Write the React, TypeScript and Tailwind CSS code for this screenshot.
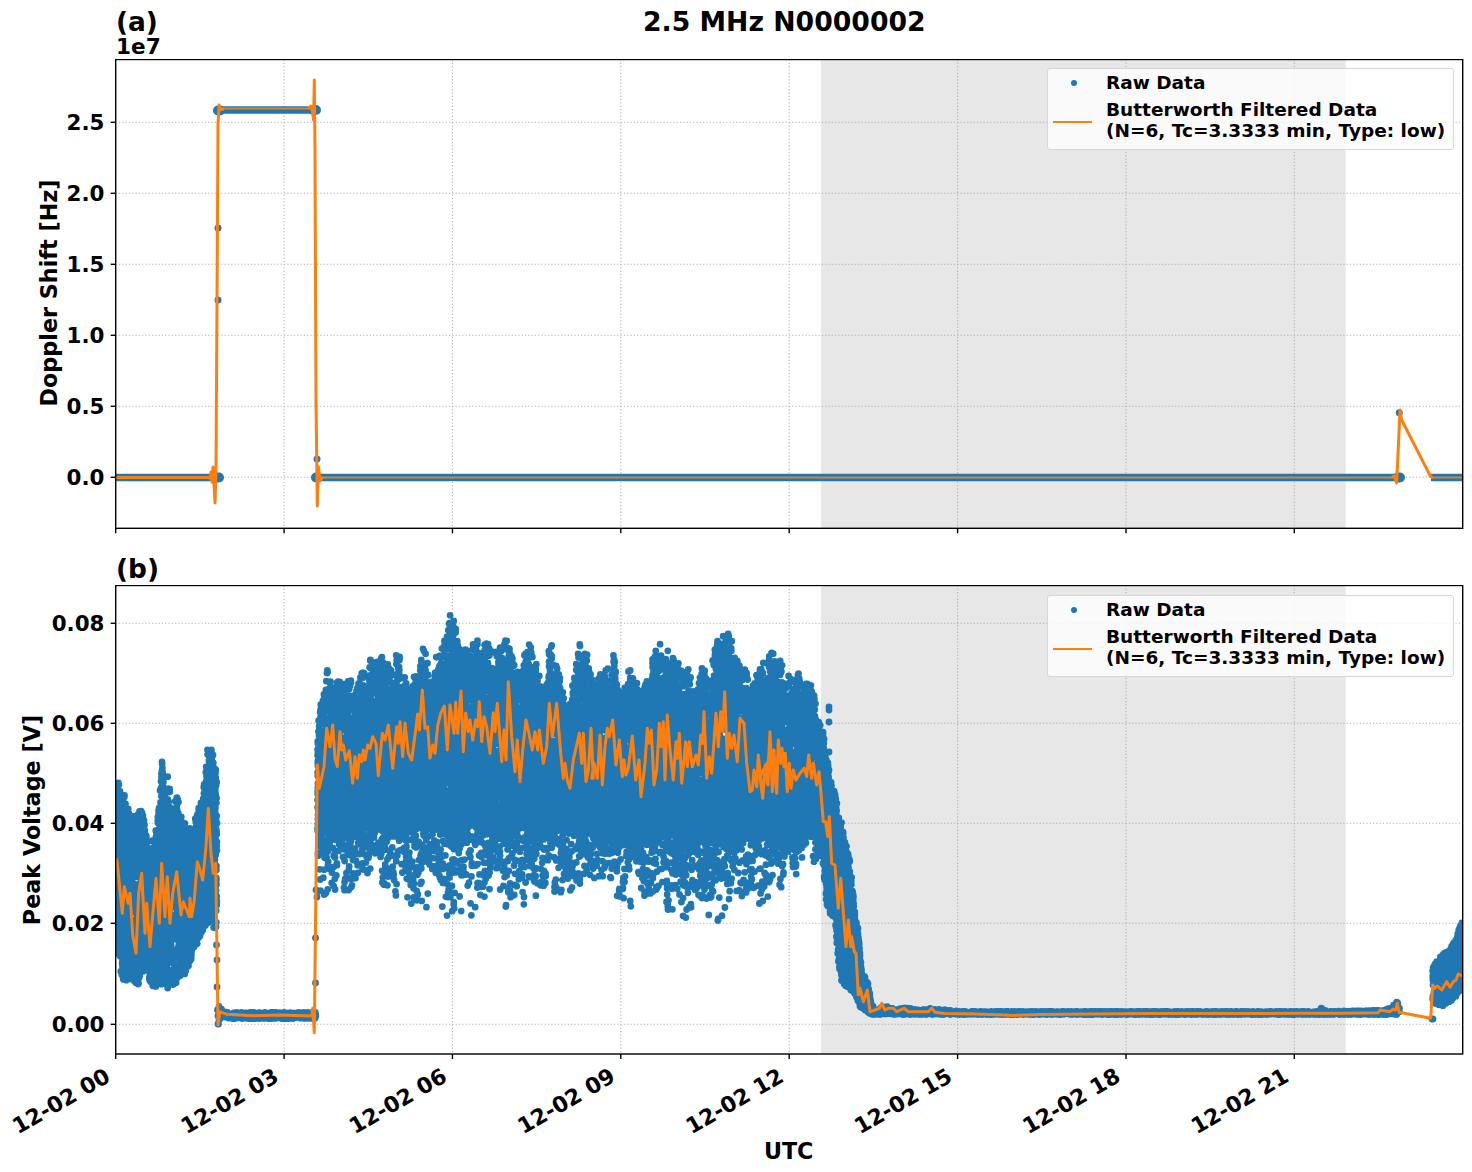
import React, { useMemo } from "react";

type P = [number, number];
const BLUE = "#1f77b4";
const ORANGE = "#ff7f0e";
const XTICKS = [115.7, 284.1, 452.45, 620.8, 789.2, 957.6, 1126, 1294.3];
const XNAMES = ["00", "03", "06", "09", "12", "15", "18", "21"];

function rng(seed: number) {
  let a = seed;
  return () => {
    a |= 0;
    a = (a + 0x6d2b79f5) | 0;
    let t = Math.imul(a ^ (a >>> 15), 1 | a);
    t = (t + Math.imul(t ^ (t >>> 7), 61 | t)) ^ t;
    return ((t ^ (t >>> 14)) >>> 0) / 4294967296;
  };
}
function lerp(tb: P[], x: number) {
  if (x <= tb[0][0]) return tb[0][1];
  for (let i = 1; i < tb.length; i++) {
    if (x <= tb[i][0]) {
      const [x0, y0] = tb[i - 1];
      const [x1, y1] = tb[i];
      return y0 + ((y1 - y0) * (x - x0)) / (x1 - x0);
    }
  }
  return tb[tb.length - 1][1];
}
const line = (pts: P[]) => "M" + pts.map(([x, y]) => `${x.toFixed(1)} ${y.toFixed(1)}`).join("L");
const zoomed = (ox: number, oy: number, pts: P[]): P[] => pts.map(([x, y]) => [ox + x / 3, oy + y / 3]);

const T1: P[] = [[115,775],[124,780],[130,803],[136,805],[142,798],[148,840],[153,835],[157,815],[162,753],[166,790],[168,760],[172,800],[177,787],[183,815],[187,822],[192,825],[197,807],[203,790],[208,737],[213,745],[217,763],[219,833]];
const B1: P[] = [[115,957],[123,983],[136,993],[146,977],[153,990],[170,993],[187,975],[200,940],[210,927],[217,940],[219,950]];
const T3: P[] = [[315,723],[318,697],[327,662],[340,660],[350,675],[360,658],[372,655],[383,648],[400,647],[412,677],[423,637],[432,660],[446,607],[458,620],[465,640],[480,633],[497,647],[508,623],[517,660],[528,630],[543,667],[552,633],[567,700],[580,635],[598,668],[613,640],[618,667],[633,660],[642,687],[653,647],[667,633],[677,658],[688,652],[697,683],[702,642],[707,673],[718,630],[725,613],[737,650],[753,677],[773,640],[790,665],[800,670],[810,680],[820,700],[823,713]];
const TAIL3: P[] = [[315,905],[330,895],[400,908],[460,925],[520,912],[580,902],[640,912],[720,930],[760,935],[790,885],[820,860]];
const CORE3: P[] = [[315,835],[400,830],[500,830],[600,836],[700,840],[770,842],[800,838],[822,842]];
const T4: P[] = [[822,713],[830,770],[837,797],[843,823],[850,857],[855,907],[858,923],[862,967],[868,977],[872,1000],[875,1008]];
const B4: P[] = [[822,857],[827,913],[835,923],[838,963],[842,987],[855,997],[860,1010],[870,1017],[875,1017]];
const T5: P[] = [[872,1008],[880,1005],[885,1002],[895,1006],[905,1004],[920,1007],[930,1005],[960,1008],[1300,1008],[1318,1008],[1322,1004],[1326,1008],[1380,1007],[1392,1004],[1398,996],[1402,1005]];
const T6: P[] = [[1430,967],[1443,950],[1450,945],[1457,933],[1462,915]];
const B6: P[] = [[1430,1000],[1436,1008],[1443,1009],[1457,1000],[1462,990]];

function buildDots() {
  const r = rng(20221202);
  const out: string[] = [];
  const add = (x: number, y: number) => out.push(`M${x.toFixed(1)} ${y.toFixed(1)}h.01`);
  const cells: number[] = [];
  for (let i = 0; i < 700; i++) cells.push(r());
  const jag = (x: number, w: number, amp: number) => Math.pow(cells[Math.floor(x / w) % 700], 1.5) * amp;
  const fill = (x0: number, x1: number, n: number, t: (x: number) => number, b: (x: number) => number, p = 1) => {
    for (let i = 0; i < n; i++) {
      const x = x0 + r() * (x1 - x0);
      const a = t(x) + 3.3;
      const c = b(x) - 3.3;
      add(x, a + Math.pow(r(), p) * Math.max(c - a, 0));
    }
  };

  fill(115, 217, 3400, (x) => lerp(T1, x) + jag(x, 3.5, 9), (x) => lerp(B1, x) - jag(x + 300, 4, 6), 0.95);
  fill(219, 316, 500, (x) => lerp([[219,1002],[223,1008],[228,1009],[316,1009]], x), () => 1022);
  fill(317.5, 823, 17000, (x) => lerp(T3, x) + jag(x, 4, 24), (x) => lerp(CORE3, x), 0.8);
  // sparse, ragged lower tail
  for (let i = 0; i < 2800; i++) {
    const x = 317.5 + r() * 504;
    const c = lerp(CORE3, x) - 10;
    const m = lerp(TAIL3, x) - 3 - jag(x + 1000, 7, 48);
    add(x, c + Math.max(m - c, 4) * Math.pow(r(), 2.3));
  }
  fill(822, 875, 2000, (x) => lerp(T4, x) + jag(x, 3, 7), (x) => lerp(B4, x));
  fill(872, 1399.5, 2600, (x) => lerp(T5, x), () => 1018);
  fill(1432.7, 1462, 900, (x) => lerp(T6, x), (x) => lerp(B6, x));
  const extra: P[] = [[216.5,945],[217,960],[217,987],[217.5,1010],[218,1016],[218,1024],[218.5,1024],[219,1020],[315,1017],[315,1015],[315.5,983],[315.5,938],[317,897],[316,890],[829,707],[829,710],[829,722],[829,752],[829,770],[1432,1019],[1433,1019]];
  extra.forEach(([x, y]) => add(x, y));
  return out.join("");
}

const orangeB: P[] = [
  ...zoomed(0, 700, [[350,475],[355,520],[367,640],[373,560],[385,610],[390,580],[398,705],[408,760],[416,580],[425,520],[435,700],[440,610],[450,740],[455,680],[468,535],[478,670],[485,490],[495,650],[502,530],[510,670],[518,580],[530,515],[543,645],[550,605],[568,650],[570,595],[575,650],[583,600],[592,485],[600,510],[608,540],[618,440],[625,325],[633,460],[640,520],[647,490],[650,700],[654,975],[660,935],[680,943],[760,947],[840,945],[935,948],[938,925],[943,998]]),
  ...zoomed(300, 590, [[48,880],[52,525],[58,595],[72,530],[80,415],[90,470],[98,405],[105,505],[112,530],[120,425],[125,480],[130,465],[137,510],[148,482],[158,580],[165,500],[172,565],[178,495],[185,515],[190,480],[195,510],[203,465],[210,475],[218,440],[228,460],[235,557],[247,430],[255,450],[265,405],[278,535],[290,410],[295,460],[300,395],[308,500],[315,400],[325,490],[335,510],[345,435],[353,372],[358,420],[367,300],[375,415],[383,410],[390,505],[398,465],[405,490],[413,407],[422,370],[433,348],[442,480],[450,345],[462,430],[467,337],[473,430],[483,303],[490,485],[497,370],[505,425],[510,390],[518,450],[527,390],[533,410],[538,335],[545,455],[552,380],[560,410],[570,490],[580,368],[585,425],[592,340],[605,515],[612,420],[618,510],[625,275],[635,440],[645,545],[652,450],[660,575],[668,480],[678,390],[688,435],[697,480],[705,425],[713,480],[718,420],[730,520],[740,470],[748,340],[757,440],[770,340],[782,490],[790,565],[795,520],[802,570],[810,595],[820,510],[830,465],[838,430],[845,520],[850,430],[858,575],[865,545],[873,415],[880,565]]),
  ...zoomed(590, 600, [[5,535],[12,490],[22,535],[30,405],[37,555],[45,440],[52,385],[58,410],[68,360],[78,495],[88,420],[97,530],[102,480],[108,525],[115,505],[127,408],[137,540],[147,480],[153,590],[165,490],[172,385],[178,430],[184,390],[192,555],[200,510],[208,370],[213,440],[220,365],[225,540],[232,345],[240,450],[250,540],[258,425],[262,475],[268,400],[275,550],[287,425],[292,500],[298,425],[307,500],[318,465],[325,495],[332,405],[338,430],[342,335],[350,535],[358,470],[365,520],[378,340],[385,440],[392,335],[398,395],[404,275],[412,475],[418,400],[425,445],[432,405],[442,485],[450,355],[462,370],[470,490],[480,575],[487,570],[492,510],[500,560],[505,465],[512,535],[518,595],[526,495],[534,555],[540,395],[547,575],[552,450]]),
  ...zoomed(760, 680, [[0,290],[8,355],[15,260],[22,310],[30,155],[38,330],[42,210],[50,340],[55,180],[62,250],[66,205],[72,260],[76,220],[82,335],[88,250],[93,325],[100,270],[108,300],[120,280],[133,265],[140,290],[146,225],[155,295],[160,250],[170,315],[177,275],[183,340],[190,425],[197,425],[203,470],[208,410],[215,550],[225,555],[235,685],[242,595],[250,695],[258,800],[265,720],[272,800],[275,770],[283,815],[288,820],[295,945],[300,925],[310,965],[322,930],[330,995],[345,990],[358,985],[365,970],[375,990],[385,985],[400,985],[410,995],[432,985],[445,995],[490,995],[505,995],[515,985],[525,997]]),
  [945,1013.5],[975,1014],[1005,1015],[1012,1015.5],[1040,1014.5],[1090,1014],[1150,1013.5],[1210,1013.5],[1260,1013.5],
  ...zoomed(1300, 900, [[0,340],[130,340],[235,338],[240,330],[270,335],[278,328],[287,330],[292,310],[298,338],[305,338],[392,355],[398,255],[405,265],[412,258],[425,270],[440,245],[450,262],[460,245],[468,240],[475,222],[487,228]]),
];

const orangeA: P[] = [[115,477.5],[208,477.5],[210,478],[211,472],[212,482],[213,467],[214,484],[215,503],[216,470],[217,300],[218,125],[219,105],[220,110],[224,108.5]];
const orangeA2: P[] = [[308,108.5],[311,106],[312.5,112],[313.6,120],[314.3,80],[315,150],[316,400],[317.3,506],[318.5,467],[320,481],[322,477.5]];
const orangeA3: P[] = [[1392,477.5],[1394,476],[1396.7,483],[1400,410],[1401.7,420],[1430.7,476.7],[1433,477.5]];

function YAxis({ ticks, label, lx, ly }: { ticks: [number, string][]; label: string; lx: number; ly: number }) {
  return (
    <g>
      {ticks.map(([y, t]) => (
        <g key={t}>
          <line x1={110.7} x2={115.7} y1={y} y2={y} stroke="black" strokeWidth={1.4} />
          <text x={104.5} y={y + 8} textAnchor="end" fontSize={21.4} fontWeight={700} fill="black">{t}</text>
        </g>
      ))}
      <text x={lx} y={ly} textAnchor="middle" fontSize={22.3} fontWeight={700} fill="black" transform={`rotate(-90 ${lx} ${ly})`}>{label}</text>
    </g>
  );
}

function Frame({ top, bottom, ys, id, children }: { top: number; bottom: number; ys: number[]; id: string; children?: React.ReactNode }) {
  return (
    <g>
      <defs>
        <clipPath id={id}><rect x={115.7} y={top} width={1347} height={bottom - top} /></clipPath>
      </defs>
      <rect x={821} y={top} width={524.7} height={bottom - top} fill="#e7e7e7" />
      {XTICKS.slice(1).map((x) => (
        <line key={x} x1={x} x2={x} y1={top} y2={bottom} stroke="#b0b0b0" strokeWidth={1.1} strokeDasharray="1.2 2.1" />
      ))}
      {ys.map((y) => (
        <line key={y} x1={115.7} x2={1462.7} y1={y} y2={y} stroke="#b0b0b0" strokeWidth={1.1} strokeDasharray="1.2 2.1" />
      ))}
      <g clipPath={`url(#${id})`}>{children}</g>
      <rect x={115.7} y={top} width={1347} height={bottom - top} fill="none" stroke="black" strokeWidth={1.4} />
      {XTICKS.map((x) => (
        <line key={x} x1={x} x2={x} y1={bottom} y2={bottom + 5} stroke="black" strokeWidth={1.4} />
      ))}
    </g>
  );
}

function Legend({ lower }: { lower?: boolean }) {
  return (
    <div className={`absolute left-[1047px] flex h-[81.5px] w-[406.5px] flex-col rounded-[3px] border border-[#d6d6d6] bg-white/80 pl-[5px] pt-[3px] text-[18.5px] font-bold leading-[21px] text-black ${lower ? "top-[10px]" : "top-[9px]"}`}>
      <div className="flex h-[21px] items-center">
        <div className="flex w-[39px] justify-center"><span className="ml-[2px] h-[6px] w-[6px] rounded-full bg-[#1f77b4]" /></div>
        <span className="ml-[14px]">Raw Data</span>
      </div>
      <div className="mt-[6px] flex items-center">
        <span className="mt-[3px] h-[2px] w-[39px] bg-[#ff7f0e]" />
        <span className="ml-[14px] whitespace-nowrap">Butterworth Filtered Data<br />(N=6, Tc=3.3333 min, Type: low)</span>
      </div>
    </div>
  );
}

export default function App() {
  const dots = useMemo(buildDots, []);
  return (
    <div className="h-[1172px] w-[1472px] overflow-hidden bg-white font-['DejaVu_Sans',sans-serif] text-black">
      <header className="flex h-[59px] flex-col pl-[116px] font-bold">
        <div className="flex h-[35px] items-baseline pt-[8px]">
          <span className="w-[527px] text-[26.4px] leading-[27px]">(a)</span>
          <h1 className="text-[26.7px] font-bold leading-[27px]">2.5 MHz N0000002</h1>
        </div>
        <div className="h-[24px] text-[21.6px] leading-[24px]">1e7</div>
      </header>

      <section className="relative">
        <svg width={1472} height={475} viewBox="0 59 1472 475" className="block" style={{ fontFamily: "'DejaVu Sans', sans-serif" }}>
          <Frame top={59.5} bottom={528.3} ys={[122.3, 193.3, 264.3, 335.3, 406.3, 477.3]} id="clipA">
            <path d="M115 477.5H218M316 477.5H1400M1431 477.5H1463M218 110H317" fill="none" stroke={BLUE} strokeWidth={7.4} />
            <path d="M218 228h.01M218 300h.01M317 459h.01M1399.3 412.7h.01" stroke={BLUE} strokeWidth={7} strokeLinecap="round" fill="none" />
            <path d="M217 477.5H219M316 477.5h2M218 110.5h2M313 110h3M1398 477.5h2" stroke={BLUE} strokeWidth={10} strokeLinecap="round" fill="none" />
            <path d="M115 477.5H210M320 477.5H1394M1431 477.5H1463M220 108.5H312" fill="none" stroke="#e58123" strokeWidth={1.8} />
            <path d={line(orangeA) + line(orangeA2) + line(orangeA3)} fill="none" stroke={ORANGE} strokeWidth={3} strokeLinejoin="round" />
          </Frame>
          <YAxis label="Doppler Shift [Hz]" lx={57} ly={293} ticks={[[122.3,"2.5"],[193.3,"2.0"],[264.3,"1.5"],[335.3,"1.0"],[406.3,"0.5"],[477.3,"0.0"]]} />
        </svg>
        <Legend />
      </section>

      <div className="h-[51px] pl-[116px] pt-[21px] text-[26.4px] font-bold leading-[27px]">(b)</div>

      <section className="relative">
        <svg width={1472} height={587} viewBox="0 585 1472 587" className="block" style={{ fontFamily: "'DejaVu Sans', sans-serif" }}>
          <Frame top={585.5} bottom={1054} ys={[623.3, 723.3, 823.3, 923.3, 1024.3]} id="clipB">
            <path d={dots} fill="none" stroke={BLUE} strokeWidth={6.8} strokeLinecap="round" />
            <path d={line(orangeB)} fill="none" stroke={ORANGE} strokeWidth={3} strokeLinejoin="round" />
          </Frame>
          <YAxis label="Peak Voltage [V]" lx={40} ly={820} ticks={[[623.3,"0.08"],[723.3,"0.06"],[823.3,"0.04"],[923.3,"0.02"],[1024.3,"0.00"]]} />
          {XTICKS.map((x, i) => (
            <text key={x} x={x - 4} y={1080.5} textAnchor="end" fontSize={21.9} fontWeight={700} fill="black" transform={`rotate(-30 ${x - 4} 1080.5)`}>{`12-02 ${XNAMES[i]}`}</text>
          ))}
          <text x={788.7} y={1158.5} textAnchor="middle" fontSize={22.2} fontWeight={700} fill="black">UTC</text>
        </svg>
        <Legend lower />
      </section>
    </div>
  );
}
